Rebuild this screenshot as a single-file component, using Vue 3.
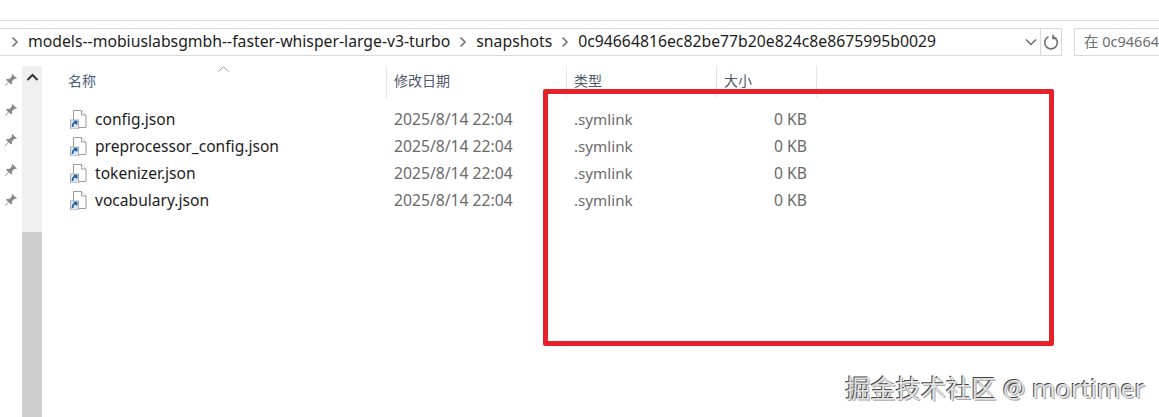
<script setup>
const files = ['config.json', 'preprocessor_config.json', 'tokenizer.json', 'vocabulary.json']
const pins = [0, 1, 2, 3, 4]
</script>

<template>
  <div class="win">
    <div class="top"></div>
    <div class="bar">
      <div class="addr">
        <svg class="chev first" width="8" height="12" viewBox="0 0 8 12"><path d="M1.500 1.500 6 6l-4.500 4.500" /></svg>
        <span class="crumb">models--mobiuslabsgmbh--faster-whisper-large-v3-turbo</span>
        <svg class="chev" width="8" height="12" viewBox="0 0 8 12"><path d="M1.500 1.500 6 6l-4.500 4.500" /></svg>
        <span class="crumb">snapshots</span>
        <svg class="chev" width="8" height="12" viewBox="0 0 8 12"><path d="M1.500 1.500 6 6l-4.500 4.500" /></svg>
        <span class="crumb">0c94664816ec82be77b20e824c8e8675995b0029</span>
        <svg class="drop" width="12" height="8" viewBox="0 0 12 8"><path d="M1 1.500 6 6.500l5-5" /></svg>
        <div class="refresh">
          <svg width="16" height="16" viewBox="0 0 16 16"><path d="M5.500 2.800A6.300 6.300 0 1 0 10.500 2.800" /><path class="head" d="M10 .8v3.700h3.500" /></svg>
        </div>
      </div>
      <div class="search">在 0c94664</div>
    </div>
    <div class="body">
      <div class="pins">
        <svg v-for="p in pins" :key="p" class="pin" width="14" height="14" viewBox="0 0 14 14">
          <path d="M8.300 1 13 5.400l-1.300.7-1.100-.4-2.600 2.600.1 2.300-1 1-2.300-2.300L1.500 13l-.5-.5 3.200-3.500L2 6.700l1-1 2.300.2L8 3.300l-.4-1z" />
        </svg>
      </div>
      <div class="scroll">
        <svg class="up" width="13" height="9" viewBox="0 0 13 9"><path d="M1.500 7 6.500 2l5 5" /></svg>
        <div class="thumb"></div>
      </div>
      <div class="list">
        <div class="head-row">
          <div class="h name">名称<svg class="sort" width="11" height="6" viewBox="0 0 11 6"><path d="M.5 5.500 5.500.8l5 4.700" /></svg></div>
          <div class="h date">修改日期</div>
          <div class="h type">类型</div>
          <div class="h size">大小</div>
        </div>
        <div class="rows">
          <div v-for="f in files" :key="f" class="row">
            <div class="name file">
              <svg class="ficon" width="18" height="19" viewBox="0 0 18 19">
                <path class="sheet" d="M3.500.5h8l4.500 4.500v12.500H3.500z" />
                <path class="sheet" d="M11.500.5V5H16" />
                <rect class="badge" x="0.500" y="10" width="8" height="9" />
                <path class="arrow" d="M2.500 17c0-3 1-4.300 3.300-4.300M3.900 11.700h2.700v2.700" />
              </svg>
              <span class="fname">{{ f }}</span>
            </div>
            <div class="date meta">2025/8/14 22:04</div>
            <div class="type meta sym">.symlink</div>
            <div class="kb meta">0 KB</div>
          </div>
        </div>
      </div>
    </div>
    <div class="mark"></div>
    <div class="wm">掘金技术社区 @ mortimer</div>
  </div>
</template>

<style>
html, body { margin: 0; background: #fff; }
</style>

<style scoped>
.win {
  position: relative;
  width: 1159px;
  height: 417px;
  overflow: hidden;
  background: #fff;
  font-family: "Noto Sans", "Noto Sans CJK SC", sans-serif;
  font-size: 15.600px;
  color: #1c1c1c;
}
.top {
  height: 20px;
  border-bottom: 1px solid #dcdcdc;
}
.bar {
  display: flex;
  margin-top: 7px;
  height: 28px;
}
.addr {
  display: flex;
  align-items: center;
  width: 1062px;
  box-sizing: border-box;
  border: 1px solid #d9d9d9;
  border-left: 0;
  padding-left: 11px;
  font-size: 15.780px;
}
.chev { flex: none; }
.chev path, .drop path {
  fill: none;
  stroke: #6e6e6e;
  stroke-width: 1.500;
}
.crumb {
  margin: 0 9px 2px;
  white-space: nowrap;
  line-height: 24px;
}
.drop {
  margin-left: auto;
  margin-right: 3px;
}
.refresh {
  width: 20px;
  height: 26px;
  border-left: 1px solid #d9d9d9;
  display: flex;
  align-items: center;
  justify-content: center;
}
.refresh path {
  fill: none;
  stroke: #6f6f6f;
  stroke-width: 1.600;
}
.search {
  margin-left: 12px;
  flex: 1;
  box-sizing: border-box;
  border: 1px solid #d9d9d9;
  border-right: 0;
  padding-left: 9px;
  line-height: 25px;
  font-size: 14.500px;
  color: #6d6d6d;
  white-space: nowrap;
}
.body {
  display: flex;
  margin-top: 10px;
  height: 352px;
}
.pins {
  width: 22px;
  padding-top: 7px;
  box-sizing: border-box;
  display: flex;
  flex-direction: column;
  gap: 16px;
  align-items: flex-start;
  padding-left: 4px;
}
.pin path { fill: #8a8a8a; }
.scroll {
  width: 20px;
  background: #f0f0f0;
  display: flex;
  flex-direction: column;
  align-items: center;
}
.up {
  margin-top: 7px;
}
.up path {
  fill: none;
  stroke: #333;
  stroke-width: 2;
}
.thumb {
  margin-top: auto;
  width: 100%;
  height: 186px;
  background: #cdcdcd;
}
.list {
  flex: 1;
  min-width: 0;
}
.head-row {
  display: flex;
  height: 32px;
  color: #4c607a;
  font-size: 14px;
}
.h {
  position: relative;
  box-sizing: border-box;
  line-height: 30px;
  border-right: 1px solid #e5e5e5;
}
.sort {
  position: absolute;
  left: 176px;
  top: 0;
}
.sort path {
  fill: none;
  stroke: #9a9a9a;
}
.name { width: 345px; padding-left: 26px; box-sizing: border-box; flex: none; }
.date { width: 180px; padding-left: 7px; box-sizing: border-box; flex: none; }
.type { width: 150px; padding-left: 7px; box-sizing: border-box; flex: none; }
.size { width: 100px; padding-left: 7px; box-sizing: border-box; flex: none; }
.kb { width: 90px; text-align: right; box-sizing: border-box; flex: none; }
.h.date, .h.type, .h.size { color: #4c5a6b; }
.rows {
  margin-top: 9px;
}
.row {
  display: flex;
  height: 27px;
  align-items: center;
  white-space: nowrap;
}
.file {
  display: flex;
  align-items: center;
  padding-left: 28px;
}
.ficon {
  flex: none;
  margin-bottom: 3px;
}
.sheet {
  fill: #fff;
  stroke: #9b9b9b;
}
.badge {
  fill: #dfe6f0;
  stroke: #a7b0bd;
}
.arrow {
  fill: none;
  stroke: #1f5fa8;
  stroke-width: 1.700;
}
.fname {
  margin-left: 7px;
  padding-bottom: 4px;
}
.meta {
  color: #6a6a6a;
  font-size: 15.700px;
  padding-bottom: 4px;
}
.sym { font-size: 15.200px; }
.mark {
  position: absolute;
  left: 543px;
  top: 89px;
  width: 511px;
  height: 257px;
  box-sizing: border-box;
  border: 5px solid #e8202a;
  border-radius: 2px;
}
.wm {
  position: absolute;
  right: 14px;
  top: 371px;
  font-size: 25.200px;
  line-height: 34px;
  color: #e2e2e2;
  white-space: nowrap;
  text-shadow: -1px -1px 0 #444, 1px 1px 0 #aaa;
}
</style>
